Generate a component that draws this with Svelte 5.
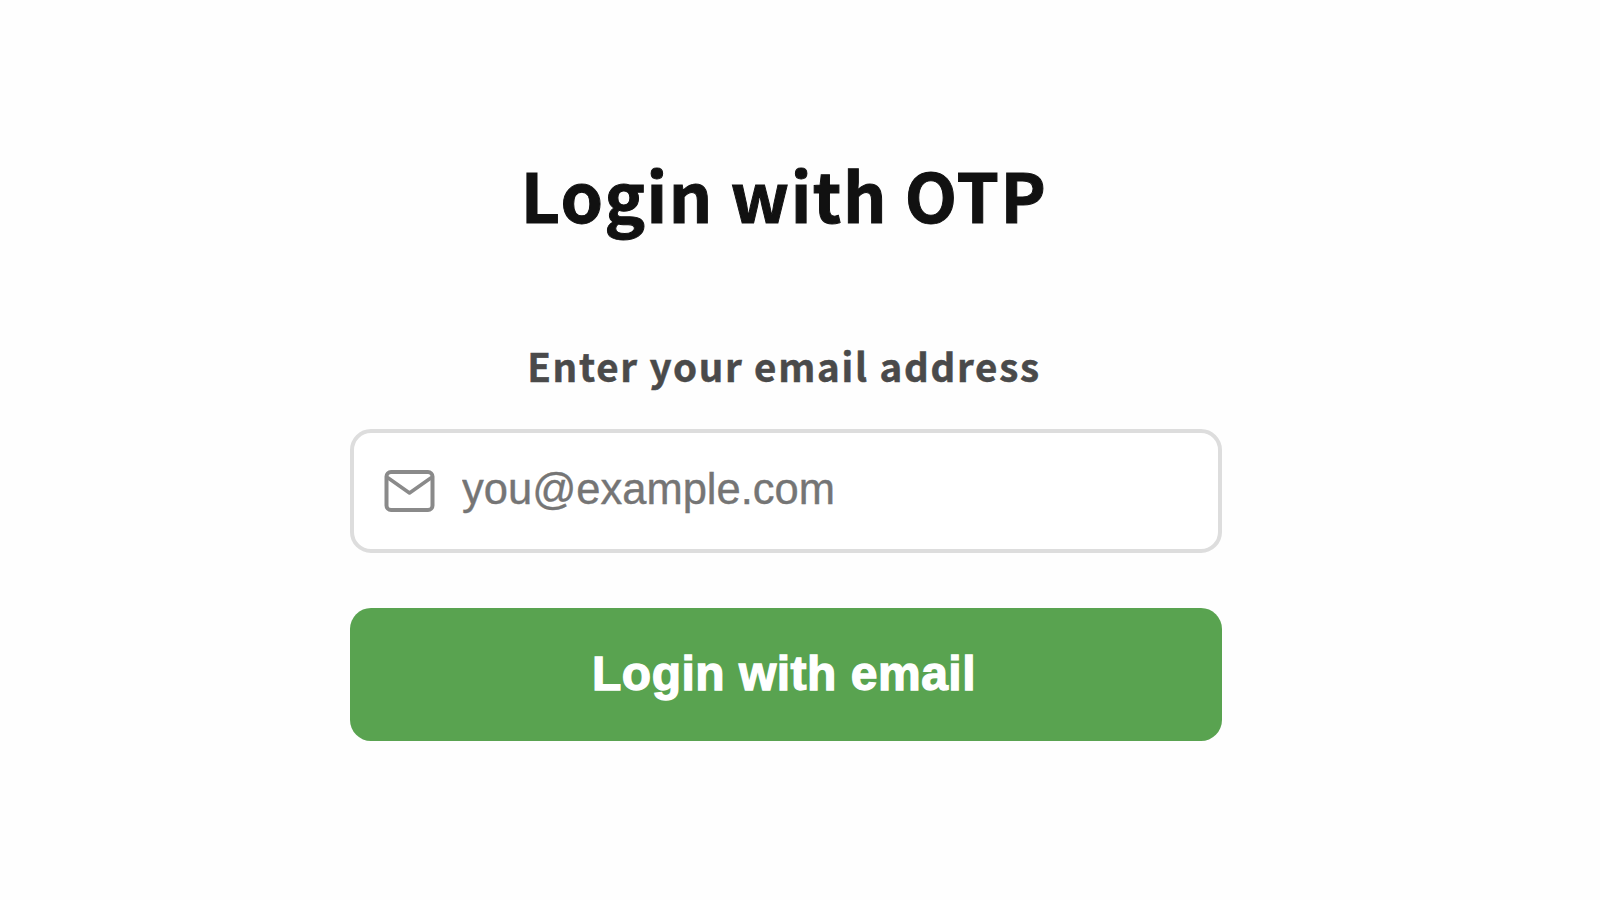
<script lang="ts">
	let email = $state('');

	function handleSubmit(event: SubmitEvent) {
		event.preventDefault();
	}
</script>

<main>
	<form onsubmit={handleSubmit} novalidate>
		<h1>Login with OTP</h1>

		<label for="email">Enter your email address</label>

		<div class="field">
			<svg viewBox="0 0 50 42" aria-hidden="true">
				<rect x="2" y="2" width="46" height="38" rx="4.5" />
				<path d="M3 7.5 25 23 47 7.5" />
			</svg>
			<input id="email" type="email" placeholder="you@example.com" bind:value={email} />
		</div>

		<button type="submit">Login with email</button>
	</form>
</main>

<style>
	:global(body) {
		margin: 0;
		background: #fefefe;
	}

	main {
		display: flex;
		justify-content: center;
		box-sizing: border-box;
		height: 900px;
		padding: 144px 29px 0 0;
		overflow: hidden;
	}

	form {
		display: flex;
		flex-direction: column;
		width: 872px;
	}

	h1,
	label {
		font-family: 'Noto Sans CJK SC', sans-serif;
		font-weight: 700;
		text-align: center;
		white-space: nowrap;
	}

	h1 {
		margin: 0;
		padding-right: 3px;
		color: #111;
		font-size: 68px;
		line-height: 100px;
		letter-spacing: 1.45px;
		-webkit-text-stroke: 1px;
	}

	label {
		margin-top: 91px;
		padding-right: 3px;
		color: #4a4a4a;
		font-size: 38.5px;
		line-height: 60px;
		letter-spacing: 1.75px;
		-webkit-text-stroke: 0.5px;
	}

	.field {
		display: flex;
		align-items: center;
		gap: 27.5px;
		box-sizing: border-box;
		height: 124.5px;
		margin-top: 33.5px;
		padding: 0 30px;
		border: 4px solid #ddd;
		border-radius: 21px;
		background: #fff;
	}

	svg {
		flex: none;
		width: 51px;
		height: 42px;
		fill: none;
		stroke: #8a8a8a;
		stroke-width: 4;
		stroke-linejoin: round;
	}

	path {
		stroke-width: 3.5;
	}

	input {
		flex: 1;
		min-width: 0;
		padding: 0 0 2px;
		border: 0;
		outline: 0;
		background: none;
		font: 43.5px 'Liberation Sans', Arial, sans-serif;
	}

	input::placeholder {
		color: #757575;
		-webkit-text-stroke: 0.4px;
	}

	button {
		height: 133px;
		margin-top: 55px;
		padding: 0 3px 2px 0;
		border: 0;
		border-radius: 21px;
		background: #59a350;
		color: #fff;
		font: 700 48px 'Liberation Sans', Arial, sans-serif;
		letter-spacing: 0.5px;
		-webkit-text-stroke: 1.3px;
	}
</style>
